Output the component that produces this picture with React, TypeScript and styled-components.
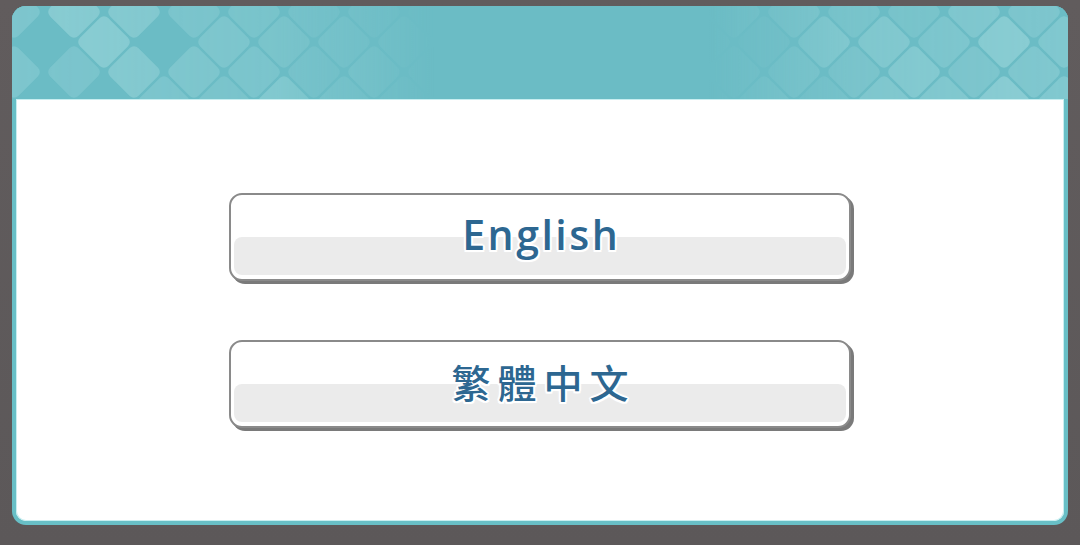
import React from 'react';
import styled, { createGlobalStyle } from 'styled-components';

const GlobalStyle = createGlobalStyle`
  html, body {
    margin: 0;
    padding: 0;
    background: #5f5a5b;
  }
`;

const Page = styled.div`
  width: 1080px;
  height: 545px;
  box-sizing: border-box;
  padding: 6px 12px 20px 12px;
  background: linear-gradient(180deg, #615c5d 0%, #5c5859 100%);
`;

const Panel = styled.div`
  height: 100%;
  display: flex;
  flex-direction: column;
  border-radius: 14px;
  background: #68bfc6;
  padding: 0 4px 4px 4px;
  box-sizing: border-box;
  overflow: hidden;
`;

const Header = styled.div`
  height: 93px;
  flex-shrink: 0;
  margin: 0 -4px;
  background: #6bbcc5;

  svg {
    display: block;
    width: 100%;
    height: 100%;
  }
`;

const Body = styled.div`
  flex: 1;
  background: #fff;
  border-radius: 0 0 10px 10px;
  box-shadow: inset 0 0 0 1px #c8eef0;
  display: flex;
  flex-direction: column;
  align-items: center;
  justify-content: center;
  gap: 59px;
`;

const LangButton = styled.button`
  position: relative;
  width: 622px;
  height: 88px;
  box-sizing: border-box;
  border: 2px solid #8a8a8a;
  border-radius: 13px;
  background: #fff;
  box-shadow: 3px 3px 0 #7a7a7a;
  cursor: pointer;
  padding: 0;
  display: flex;
  align-items: center;
  justify-content: center;

  &::before {
    content: '';
    position: absolute;
    left: 3px;
    right: 3px;
    top: 42px;
    bottom: 4px;
    border-radius: 8px;
    background: #ebebeb;
  }
`;

const Label = styled.span<{ $cjk?: boolean }>`
  position: relative;
  color: #2d6791;
  font-family: ${p =>
    p.$cjk
      ? '"Noto Sans CJK TC", "Noto Sans CJK SC", sans-serif'
      : '"Open Sans", "Noto Sans", sans-serif'};
  font-weight: ${p => (p.$cjk ? 500 : 600)};
  font-size: ${p => (p.$cjk ? '39px' : '41px')};
  letter-spacing: ${p => (p.$cjk ? '7px' : '2.5px')};
  padding-left: ${p => (p.$cjk ? '7px' : '2.5px')};
  line-height: 1;
  margin-top: ${p => (p.$cjk ? '-4px' : '-4px')};
  text-shadow:
    2px 0 0 #fff, -2px 0 0 #fff, 0 2px 0 #fff, 0 -2px 0 #fff,
    1.5px 1.5px 0 #fff, -1.5px 1.5px 0 #fff, 1.5px -1.5px 0 #fff,
    -1.5px -1.5px 0 #fff, 0 0 4px rgba(255, 255, 255, 0.9);
`;

// deterministic pseudo random shades for the diamond tiles
const shade = (i: number, j: number) => {
  const v = Math.sin(i * 12.9898 + j * 78.233) * 43758.5453;
  return v - Math.floor(v);
};

const DiamondPattern = () => {
  const tiles: React.ReactNode[] = [];
  const step = 60;
  for (let j = -1; j < 5; j++) {
    for (let i = -1; i < 20; i++) {
      const cx = i * step + (j % 2 === 0 ? 0 : step / 2) + 32;
      const cy = j * 30 + 36;
      const r = shade(i, j);
      if (r < 0.12) continue;
      const opacity = 0.25 + r * 0.35;
      tiles.push(
        <rect
          key={`${i}-${j}`}
          x={cx - 20}
          y={cy - 20}
          width={40}
          height={40}
          rx={6}
          fill="#a2dade"
          opacity={opacity}
          transform={`rotate(45 ${cx} ${cy})`}
        />
      );
    }
  }
  return (
    <svg viewBox="0 0 1056 93" preserveAspectRatio="none">
      <defs>
        <linearGradient id="fade" x1="0" x2="1" y1="0" y2="0">
          <stop offset="0" stopColor="#fff" stopOpacity="1" />
          <stop offset="0.25" stopColor="#fff" stopOpacity="0.7" />
          <stop offset="0.4" stopColor="#fff" stopOpacity="0" />
          <stop offset="0.66" stopColor="#fff" stopOpacity="0" />
          <stop offset="0.8" stopColor="#fff" stopOpacity="0.7" />
          <stop offset="1" stopColor="#fff" stopOpacity="1" />
        </linearGradient>
        <mask id="fadeMask">
          <rect x="0" y="0" width="1056" height="93" fill="url(#fade)" />
        </mask>
      </defs>
      <rect x="0" y="0" width="1056" height="93" fill="#6bbcc5" />
      <g mask="url(#fadeMask)">{tiles}</g>
    </svg>
  );
};

const languages = [
  { key: 'en', label: 'English', cjk: false },
  { key: 'zh-TW', label: '繁體中文', cjk: true }
];

const App = () => {
  return (
    <>
      <GlobalStyle />
      <Page>
        <Panel>
          <Header>
            <DiamondPattern />
          </Header>
          <Body>
            {languages.map(lang => (
              <LangButton key={lang.key}>
                <Label $cjk={lang.cjk}>{lang.label}</Label>
              </LangButton>
            ))}
          </Body>
        </Panel>
      </Page>
    </>
  );
};

export default App;
